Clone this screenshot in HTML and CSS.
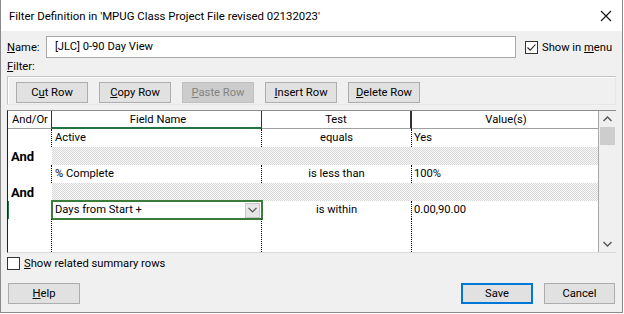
FILE: index.html
```html
<!DOCTYPE html>
<html>
<head>
<meta charset="utf-8">
<link rel="stylesheet" href="styles.css">
</head>
<body>
<div class="win">
  <div class="titlebar">
    <span class="title">Filter Definition in 'MPUG Class Project File revised 02132023'</span>
    <svg class="close" width="12" height="12" viewBox="0 0 12 12"><path d="M1 1 L11 11 M11 1 L1 11" stroke="#111" stroke-width="1.1" fill="none"/></svg>
  </div>
  <div class="content">
    <div class="name-row">
      <span class="lbl"><u>N</u>ame:</span>
      <div class="input">[JLC] 0-90 Day View</div>
      <span class="chk checked"><svg width="11" height="11" viewBox="0 0 11 11"><path d="M1.5 5.5 L4.2 8.2 L9.5 2.5" stroke="#222" stroke-width="1.1" fill="none"/></svg></span>
      <span class="chk-text">Show in <u>m</u>enu</span>
    </div>
    <div class="filter-lbl"><u>F</u>ilter:</div>
    <div class="toolbar">
      <button class="btn">C<u>u</u>t Row</button>
      <button class="btn"><u>C</u>opy Row</button>
      <button class="btn disabled"><u>P</u>aste Row</button>
      <button class="btn"><u>I</u>nsert Row</button>
      <button class="btn"><u>D</u>elete Row</button>
    </div>
    <div class="grid">
      <div class="table">
        <div class="row head">
          <div class="c c1">And/Or</div>
          <div class="c c2 sel">Field Name</div>
          <div class="c c3">Test</div>
          <div class="c c4">Value(s)</div>
        </div>
        <div class="row">
          <div class="c c1"></div>
          <div class="c c2">Active</div>
          <div class="c c3">equals</div>
          <div class="c c4">Yes</div>
        </div>
        <div class="row androw">
          <div class="c c1 and">And</div>
          <div class="c rest"></div>
        </div>
        <div class="row">
          <div class="c c1"></div>
          <div class="c c2">% Complete</div>
          <div class="c c3">is less than</div>
          <div class="c c4">100%</div>
        </div>
        <div class="row androw">
          <div class="c c1 and">And</div>
          <div class="c rest"></div>
        </div>
        <div class="row current">
          <div class="c c1"></div>
          <div class="c c2 editing"><span>Days from Start +</span><span class="dd"><svg width="9" height="6" viewBox="0 0 9 6"><path d="M0.5 0.8 L4.5 4.8 L8.5 0.8" stroke="#555" stroke-width="1.2" fill="none"/></svg></span></div>
          <div class="c c3">is within</div>
          <div class="c c4">0.00,90.00</div>
        </div>
        <div class="row filler">
          <div class="c c1"></div>
          <div class="c c2"></div>
          <div class="c c3"></div>
          <div class="c c4"></div>
        </div>
      </div>
      <div class="scroll">
        <svg class="arr" width="9" height="6" viewBox="0 0 9 6"><path d="M0.5 5 L4.5 1 L8.5 5" stroke="#555" stroke-width="1.4" fill="none"/></svg>
        <div class="thumb"></div>
        <div class="track"></div>
        <svg class="arr" width="9" height="6" viewBox="0 0 9 6"><path d="M0.5 1 L4.5 5 L8.5 1" stroke="#555" stroke-width="1.4" fill="none"/></svg>
      </div>
    </div>
    <div class="summary">
      <span class="chk"></span>
      <span><u>S</u>how related summary rows</span>
    </div>
    <div class="footer">
      <button class="btn"><u>H</u>elp</button>
      <div class="spacer"></div>
      <button class="btn default">Save</button>
      <button class="btn">Cancel</button>
    </div>
  </div>
</div>
</body>
</html>
```
FILE: styles.css
```css
* { box-sizing: border-box; }
html, body { margin: 0; padding: 0; background: #ffffff; }
body {
  font-family: Roboto, "Noto Sans", sans-serif;
  font-size: 11.2px;
  color: #000;
}
u { text-decoration: underline; text-underline-offset: 1px; }
.win {
  width: 623px;
  height: 313px;
  border: 1px solid #8a8a8a;
  border-top: 0;
  background: #f0f0f0;
  display: flex;
  flex-direction: column;
}
.titlebar {
  height: 31px;
  background: #fff;
  display: flex;
  align-items: center;
  padding: 0 8px 0 8px;
}
.title { flex: 1; font-size: 11.4px; color: #000; white-space: nowrap; }
.close { margin-right: 2px; }
.content {
  padding: 0 6px;
  display: flex;
  flex-direction: column;
}
.name-row {
  margin-top: 5px;
  height: 22px;
  display: flex;
  align-items: center;
  white-space: nowrap;
}
.lbl { width: 39px; }
.input {
  width: 470px;
  height: 22px;
  background: #fff;
  border: 1px solid #a9a9a9;
  padding: 0 0 0 8px;
  line-height: 20px;
}
.chk {
  width: 13px;
  height: 13px;
  flex: none;
  border: 1px solid #333;
  background: #fff;
  display: inline-flex;
  align-items: center;
  justify-content: center;
}
.name-row .chk { margin-left: 9px; }
.chk-text { margin-left: 4px; }
.filter-lbl {
  height: 18px;
  line-height: 17px;
}
.toolbar {
  height: 29px;
  border: 1px solid #c4c4c4;
  border-right-color: #e8e8e8;
  border-bottom-color: #e8e8e8;
  box-shadow: inset 1px 1px 0 #fff;
  padding: 5px 8px 0 8px;
  display: flex;
  gap: 11px;
}
.btn {
  font: inherit;
  color: #000;
  width: 72px;
  height: 21px;
  background: #e1e1e1;
  border: 1px solid #adadad;
  padding: 0;
  line-height: 18px;
}
.btn.disabled {
  background: #cccccc;
  border-color: #bfbfbf;
  color: #838383;
}
.btn.default {
  border: 2px solid #0078d7;
  line-height: 16px;
}
.grid {
  margin-top: 5px;
  height: 143px;
  border-top: 1px solid #8c8c8c;
  border-left: 1px solid #222;
  border-bottom: 1px solid #d9d9d9;
  display: flex;
  background: #fff;
}
.table {
  width: 591px;
  display: flex;
  flex-direction: column;
  border-right: 1px solid #a8a8a8;
}
.row {
  display: flex;
  height: 18px;
  flex: none;
}
.c {
  height: 100%;
  line-height: 17px;
  white-space: nowrap;
  overflow: hidden;
}
.c1 { width: 44px; padding-left: 4px; border-right: 1px dotted #000; }
.c2 { width: 210px; padding-left: 3px; border-right: 1px dotted #000; }
.c3 { width: 150px; text-align: center; border-right: 1px dotted #000; }
.c4 { flex: 1; padding-left: 2px; }
.head .c {
  border-right: 1px solid #333;
  border-bottom: 1px solid #a0a0a0;
  background: #fff;
  text-align: center;
}
.head .c1 { text-align: left; padding-left: 4px; }
.head .c2.sel { border-bottom: 2px solid #217346; }
.head .c3 { border-right: 2px solid #333; }
.head .c4 { border-right: 0; }
.androw .and {
  font-weight: bold;
  font-size: 13px;
  padding-left: 3px;
  line-height: 19px;
  background: #fff;
  border-right: 0;
  overflow: visible;
}
.androw .rest {
  flex: 1;
  background-color: #ffffff;
  background-image: conic-gradient(#d8d8d8 25%, #f8f8f8 0 50%, #d8d8d8 0 75%, #f8f8f8 0);
  background-size: 2px 2px;
}
.current .c1 { border-left: 1px solid #217346; width: 44px; }
.editing {
  border: 2px solid #3a7d3a;
  display: flex;
  align-items: center;
  justify-content: space-between;
  padding: 0 1px 0 1px;
  margin-left: -1px;
  width: 212px;
  margin-top: -1px;
  height: 20px;
  line-height: 16px;
}
.current .c3 { margin-left: -1px; }
.editing span:first-child { padding-left: 1px; }
.dd {
  width: 15px;
  height: 15px;
  background: #e6e6e6;
  border: 1px solid #c8c8c8;
  display: flex;
  align-items: center;
  justify-content: center;
}
.filler { flex: 1; height: auto; }
.scroll {
  width: 17px;
  background: #f0f0f0;
  display: flex;
  flex-direction: column;
  align-items: center;
  padding-top: 5px;
  padding-bottom: 5px;
}
.thumb {
  width: 15px;
  height: 18px;
  margin-top: 5px;
  background: #cdcdcd;
}
.track { flex: 1; }
.summary {
  margin-top: 4px;
  height: 13px;
  display: flex;
  align-items: center;
  gap: 4px;
}
.footer {
  margin-top: 13px;
  display: flex;
  padding-left: 1px;
  gap: 11px;
}
.footer .spacer { flex: 1; }
.footer .btn { width: 72px; }
.footer .btn:last-child { width: 71px; margin-right: 1px; }
```
